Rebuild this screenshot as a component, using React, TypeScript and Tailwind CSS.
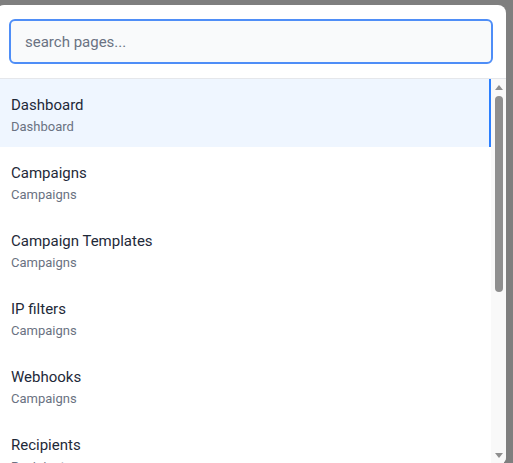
import { useState } from "react";

type Page = { title: string; section: string };

const pages: Page[] = [
  { title: "Dashboard", section: "Dashboard" },
  { title: "Campaigns", section: "Campaigns" },
  { title: "Campaign Templates", section: "Campaigns" },
  { title: "IP filters", section: "Campaigns" },
  { title: "Webhooks", section: "Campaigns" },
  { title: "Recipients", section: "Recipients" },
  { title: "Groups", section: "Recipients" },
  { title: "Domains", section: "Domains" },
  { title: "SMTP Configurations", section: "Domains" },
  { title: "Settings", section: "Settings" },
];

// headless chrome hides native scrollbars, so draw the classic one
function ScrollBar() {
  return (
    <div className="flex w-[15px] shrink-0 flex-col items-center bg-[#f9f9f9]">
      <div className="mt-[6px] h-0 w-0 border-x-[4.5px] border-b-[5px] border-x-transparent border-b-[#8f8f8f]" />
      <div className="mt-[6px] h-[196px] w-[8px] rounded-full bg-[#8f8f8f]" />
      <div className="mt-auto mb-[7px] h-0 w-0 border-x-[4.5px] border-t-[5px] border-x-transparent border-t-[#8f8f8f]" />
    </div>
  );
}

export default function App() {
  const [query, setQuery] = useState("");
  const active = 0;

  return (
    <div
      className="h-[463px] overflow-hidden bg-[#7f7f7f] pt-[5px]"
      style={{ fontFamily: 'Roboto, "Noto Sans", sans-serif' }}
    >
      <div className="ml-[-4px] flex h-[460px] w-[510px] flex-col overflow-hidden rounded-lg bg-white">
        <div className="border-b border-gray-200 px-[13px] pt-[14px] pb-[14px]">
          <input
            autoFocus
            value={query}
            onChange={(e) => setQuery(e.target.value)}
            placeholder="search pages..."
            className="h-[45px] w-full rounded-md border-2 border-[#4f8ef7] bg-gray-50 px-[14px] text-[15px] text-gray-800 caret-gray-900 placeholder:text-gray-500 outline-none"
          />
        </div>
        <div className="flex min-h-0 flex-1">
          <ul className="min-w-0 flex-1 overflow-hidden">
            {pages.map((p, i) => (
              <li
                key={p.title}
                className={
                  i === active
                    ? "border-r-2 border-blue-500 bg-blue-50 pt-[16px] pb-[12px] pl-[15px]"
                    : "pt-[16px] pb-[12px] pl-[15px]"
                }
              >
                <div className="text-[15px] leading-5 text-gray-800">{p.title}</div>
                <div className="mt-[3px] text-[13px] leading-[17px] text-gray-500">{p.section}</div>
              </li>
            ))}
          </ul>
          <ScrollBar />
        </div>
      </div>
    </div>
  );
}
